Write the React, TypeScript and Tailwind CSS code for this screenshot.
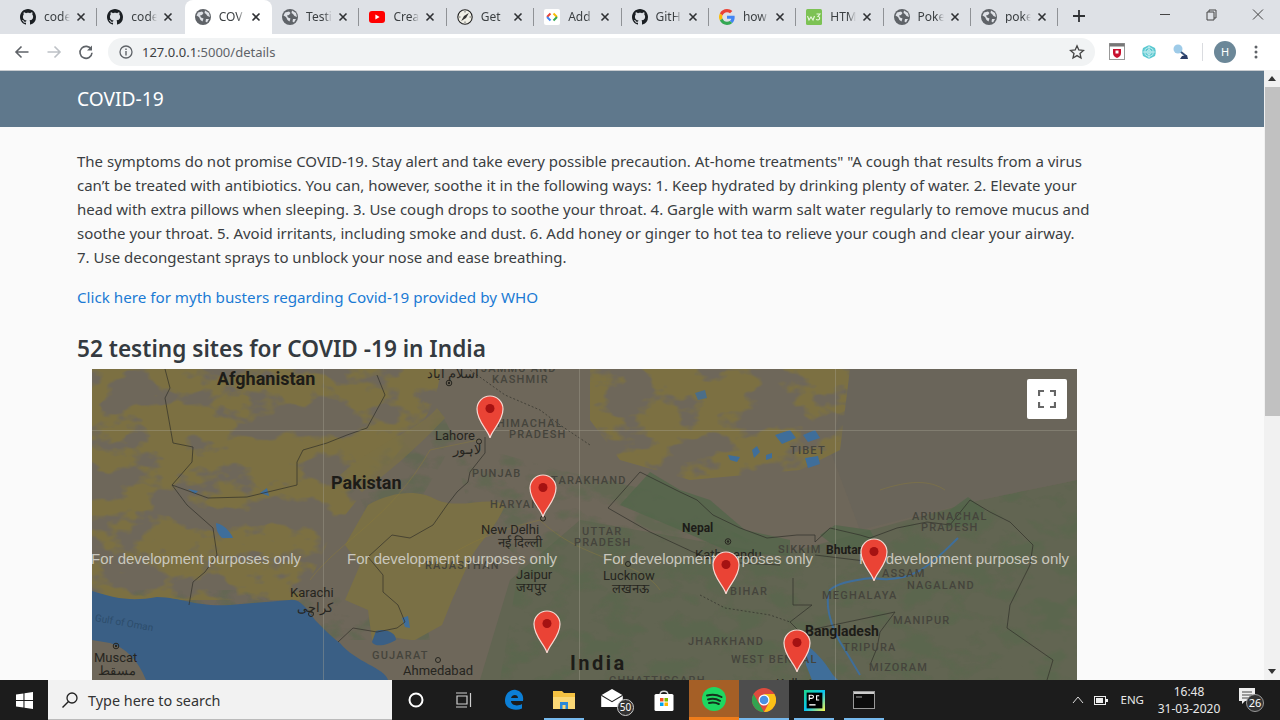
import React from "react";

const FONT = "font-['Noto_Sans','Open_Sans',sans-serif]";

function Globe() {
  return (
    <svg width="16" height="16" viewBox="0 0 16 16">
      <circle cx="8" cy="8" r="8" fill="#5f6368" />
      <path d="M3 3.5 L7 2.5 L8.5 4 L7 6 L5 6.5 L6 8.5 L8.5 9.5 L7.5 12.5 L5.5 11 L4 8 L1.5 6.5 Z M10 1.5 L14 4 L15 8 L12.5 7 L11 5 L9.5 4 Z M11 10 L14 10 L12 13.5 L10.5 12.5Z" fill="#dee1e6" />
    </svg>
  );
}
function GitHubIcon() {
  return (
    <svg width="16" height="16" viewBox="0 0 16 16" fill="#1b1f23">
      <path d="M8 0C3.58 0 0 3.58 0 8c0 3.54 2.29 6.53 5.47 7.59.4.07.55-.17.55-.38 0-.19-.01-.82-.01-1.49-2.01.37-2.53-.49-2.69-.94-.09-.23-.48-.94-.82-1.13-.28-.15-.68-.52-.01-.53.63-.01 1.08.58 1.23.82.72 1.21 1.87.87 2.33.66.07-.52.28-.87.51-1.07-1.78-.2-3.64-.89-3.64-3.95 0-.87.31-1.59.82-2.15-.08-.2-.36-1.02.08-2.12 0 0 .67-.21 2.2.82.64-.18 1.32-.27 2-.27s1.36.09 2 .27c1.53-1.04 2.2-.82 2.2-.82.44 1.1.16 1.92.08 2.12.51.56.82 1.27.82 2.15 0 3.07-1.87 3.75-3.65 3.95.29.25.54.73.54 1.48 0 1.07-.01 1.93-.01 2.2 0 .21.15.46.55.38A8.01 8.01 0 0 0 16 8c0-4.42-3.58-8-8-8z" />
    </svg>
  );
}
function YouTube() {
  return (
    <svg width="16" height="16" viewBox="0 0 16 16">
      <rect y="2" width="16" height="12" rx="3" fill="#f00" />
      <path d="M6.4 5.5 L10.6 8 L6.4 10.5Z" fill="#fff" />
    </svg>
  );
}
function Compass() {
  return (
    <svg width="16" height="16" viewBox="0 0 16 16">
      <circle cx="8" cy="8" r="7.2" fill="#f0efe6" stroke="#222" strokeWidth="1.1" />
      <path d="M11.8 4 L9 9 L4.2 12 L7 7Z" fill="#333" />
      <path d="M8 2 V3.5 M8 12.5 V14 M2 8 H3.5 M12.5 8 H14" stroke="#333" strokeWidth="0.7" />
    </svg>
  );
}
function CodeLab() {
  return (
    <svg width="16" height="16" viewBox="0 0 16 16">
      <rect width="16" height="16" rx="2" fill="#fff" />
      <path d="M6.5 4.5 L3 8" stroke="#ea4335" strokeWidth="2" fill="none" />
      <path d="M3 8 L6.5 11.5" stroke="#4285f4" strokeWidth="2" fill="none" />
      <path d="M9.5 4.5 L13 8" stroke="#fbbc05" strokeWidth="2" fill="none" />
      <path d="M13 8 L9.5 11.5" stroke="#34a853" strokeWidth="2" fill="none" />
    </svg>
  );
}
function GoogleG() {
  return (
    <svg width="16" height="16" viewBox="0 0 48 48">
      <path fill="#EA4335" d="M24 9.5c3.5 0 6.7 1.2 9.2 3.6l6.9-6.9C35.9 2.4 30.5 0 24 0 14.6 0 6.5 5.4 2.6 13.2l8 6.2C12.5 13.6 17.8 9.5 24 9.5z" />
      <path fill="#4285F4" d="M47 24.5c0-1.6-.1-3.1-.4-4.5H24v9h13c-.6 3-2.3 5.5-4.8 7.2l7.7 6C44.4 37.9 47 31.8 47 24.5z" />
      <path fill="#FBBC05" d="M10.5 28.6c-.5-1.4-.8-3-.8-4.6s.3-3.2.8-4.6l-8-6.2C.9 16.5 0 20.1 0 24s.9 7.5 2.6 10.8l7.9-6.2z" />
      <path fill="#34A853" d="M24 48c6.5 0 11.9-2.1 15.9-5.8l-7.7-6c-2.2 1.5-4.9 2.3-8.2 2.3-6.2 0-11.5-4.1-13.4-9.9l-8 6.2C6.5 42.6 14.6 48 24 48z" />
    </svg>
  );
}
function W3() {
  return (
    <svg width="16" height="16" viewBox="0 0 16 16">
      <rect width="16" height="16" rx="1.5" fill="#7cc254" />
      <path d="M1.5 7 L3 11 L5 8 L7 11 L8.5 7 M10.5 5 H14 L12 7.5 C14 7.5 14.5 10.5 12 11 L10 10.5" stroke="#e8f7dd" strokeWidth="1.1" fill="none" />
    </svg>
  );
}

const tabs: { t: string; icon: React.ReactNode; active?: boolean; sep?: boolean }[] = [
  { t: "code", icon: <GitHubIcon />, sep: true },
  { t: "code", icon: <GitHubIcon /> },
  { t: "COV", icon: <Globe />, active: true },
  { t: "Testi", icon: <Globe />, sep: true },
  { t: "Crea", icon: <YouTube />, sep: true },
  { t: "Get", icon: <Compass />, sep: true },
  { t: "Add", icon: <CodeLab />, sep: true },
  { t: "GitH", icon: <GitHubIcon />, sep: true },
  { t: "how", icon: <GoogleG />, sep: true },
  { t: "HTM", icon: <W3 />, sep: true },
  { t: "Poke", icon: <Globe />, sep: true },
  { t: "poke", icon: <Globe />, sep: true },
];

function Tab({ t, icon, active, sep }: (typeof tabs)[number]) {
  return (
    <div className={`relative flex h-[34px] w-[87.36px] shrink-0 items-center pl-[10px] ${active ? "rounded-t-lg bg-white" : ""}`}>
      <span className="flex w-4 shrink-0 items-center justify-center">{icon}</span>
      <span className="ml-2 w-[28px] whitespace-nowrap text-[12px] leading-none text-[#3c4043]">
        <span className="block w-[26px] truncate [text-overflow:clip] [mask-image:linear-gradient(to_right,black_70%,transparent)]">{t}</span>
      </span>
      <svg width="10" height="10" viewBox="0 0 10 10" className="ml-[4px] shrink-0">
        <path d="M1.5 1.5 L8.5 8.5 M8.5 1.5 L1.5 8.5" stroke="#2f3134" strokeWidth="1.6" />
      </svg>
      {sep && <span className="absolute right-0 top-[8px] h-[18px] w-px bg-[#8f9296]" />}
    </div>
  );
}

function TabStrip() {
  return (
    <div className="flex h-[34px] items-start bg-[#dee1e6] pl-[10px]">
      {tabs.map((t, i) => (
        <Tab key={i} {...t} />
      ))}
      <svg width="12" height="12" viewBox="0 0 12 12" className="ml-[15px] mt-[10px]">
        <path d="M6 0 V12 M0 6 H12" stroke="#2f3134" strokeWidth="1.8" />
      </svg>
      <div className="ml-auto flex h-[30px] items-center">
        <svg width="46" height="30" viewBox="0 0 46 30"><path d="M18 14.5 H28" stroke="#444" strokeWidth="1" /></svg>
        <svg width="46" height="30" viewBox="0 0 46 30"><path d="M19 12 H26 V20 H19 Z M21 12 V10 H28 V18 H26" stroke="#444" fill="none" strokeWidth="1" /></svg>
        <svg width="46" height="30" viewBox="0 0 46 30"><path d="M19 9.5 L29 19.5 M29 9.5 L19 19.5" stroke="#444" strokeWidth="1" /></svg>
      </div>
    </div>
  );
}

function Toolbar() {
  return (
    <div className="flex h-[36px] items-center bg-white">
      <svg width="16" height="16" viewBox="0 0 16 16" className="ml-[14px]">
        <path d="M14.5 8 H2 M7.5 2.5 L2 8 L7.5 13.5" stroke="#5f6368" strokeWidth="1.6" fill="none" />
      </svg>
      <svg width="16" height="16" viewBox="0 0 16 16" className="ml-[16px]">
        <path d="M1.5 8 H14 M8.5 2.5 L14 8 L8.5 13.5" stroke="#bdc1c6" strokeWidth="1.6" fill="none" />
      </svg>
      <svg width="16" height="16" viewBox="0 0 16 16" className="ml-[16px]">
        <path d="M13.3 5.5 A6 6 0 1 0 14 8.8" stroke="#5f6368" strokeWidth="1.6" fill="none" />
        <path d="M14 1.5 V6.5 H9 Z" fill="#5f6368" />
      </svg>
      <div className="ml-[14px] flex h-[28px] w-[987px] items-center rounded-full bg-[#f1f3f4] pl-[10px]">
        <svg width="16" height="16" viewBox="0 0 16 16">
          <circle cx="8" cy="8" r="6" stroke="#5f6368" strokeWidth="1.3" fill="none" />
          <path d="M8 7 V11.5 M8 4.5 V6" stroke="#5f6368" strokeWidth="1.4" />
        </svg>
        <span className="ml-[8px] translate-y-px text-[13px] text-[#3c4043]">
          127.0.0.1<span className="text-[#5f6368]">:5000/details</span>
        </span>
        <svg width="16" height="16" viewBox="0 0 16 16" className="ml-auto mr-[10px]">
          <path d="M8 1.8 L9.8 6 L14.5 6.4 L11 9.4 L12 14 L8 11.6 L4 14 L5 9.4 L1.5 6.4 L6.2 6 Z" stroke="#444" strokeWidth="1.3" fill="none" />
        </svg>
      </div>
      <svg width="16" height="18" viewBox="0 0 16 18" className="ml-[14px]">
        <rect x="0.5" y="0.5" width="15" height="16" fill="#fff" stroke="#999" />
        <rect x="0.5" y="0.5" width="15" height="3" fill="#777" />
        <path d="M4 6 H12 V10 C12 13 10 14 8 15 C6 14 4 13 4 10 Z" fill="#c8102e" />
        <path d="M6.5 7.5 H9.5 V10.5 H6.5 Z" fill="#fff" />
      </svg>
      <svg width="16" height="16" viewBox="0 0 16 16" className="ml-[16px]">
        <path d="M8 1 L14 4 L15 8 L14 12 L8 15 L2 12 L1 8 L2 4 Z" fill="#5ac8d0" />
        <path d="M8 3 L12 5.5 V10.5 L8 13 L4 10.5 V5.5 Z M8 5.5 L10 7 V9.5 L8 10.5 L6 9.5 V7 Z M1 8 H15 M8 1 V15" fill="none" stroke="#d4f3f5" strokeWidth="0.8" />
      </svg>
      <svg width="18" height="18" viewBox="0 0 18 18" className="ml-[15px]">
        <circle cx="6" cy="6" r="4.5" fill="#9ecbe8" />
        <path d="M9 9 L14 13" stroke="#35507a" strokeWidth="2" />
        <path d="M8 16 L16 16 L15 12 L10 13Z" fill="#2b3d66" />
      </svg>
      <span className="ml-[12px] h-[18px] w-px bg-[#dadce0]" />
      <span className="ml-[11px] flex h-[22px] w-[22px] items-center justify-center rounded-full bg-[#6b8798] text-[11px] text-white">H</span>
      <svg width="4" height="14" viewBox="0 0 4 14" className="ml-[18px]">
        <circle cx="2" cy="2" r="1.5" fill="#5f6368" />
        <circle cx="2" cy="7" r="1.5" fill="#5f6368" />
        <circle cx="2" cy="12" r="1.5" fill="#5f6368" />
      </svg>
    </div>
  );
}

function Pin({ x, y }: { x: number; y: number }) {
  return (
    <svg width="28" height="44" viewBox="0 0 28 44" className="absolute" style={{ left: x - 14, top: y - 43 }}>
      <path d="M14 43 C12.5 35 1 27 1 14 A13 13 0 0 1 27 14 C27 27 15.5 35 14 43 Z" fill="#ea4335" stroke="#f6d8d2" strokeWidth="1.2" />
      <circle cx="14" cy="13.5" r="4.5" fill="#a51212" />
    </svg>
  );
}

const REGION = "text-[11px] font-medium tracking-[1.2px] text-[#45443c]";
const CITY = "text-[13px] text-[#26251f]";
const COUNTRY = "text-[18px] font-bold text-[#1d1c18]";
const SMALLCOUNTRY = "text-[12px] font-bold text-[#1d1c18]";

const labels: { x: number; y: number; t: string; cls: string }[] = [
  { x: 217, y: 370, t: "Afghanistan", cls: COUNTRY },
  { x: 331, y: 474, t: "Pakistan", cls: COUNTRY },
  { x: 481, y: 363, t: "JAMMU AND", cls: REGION },
  { x: 492, y: 374, t: "KASHMIR", cls: REGION },
  { x: 497, y: 418, t: "HIMACHAL", cls: REGION },
  { x: 509, y: 429, t: "PRADESH", cls: REGION },
  { x: 472, y: 468, t: "PUNJAB", cls: REGION },
  { x: 490, y: 499, t: "HARYAN", cls: REGION },
  { x: 551, y: 475, t: "TARAKHAND", cls: REGION },
  { x: 425, y: 560, t: "RAJASTHAN", cls: REGION },
  { x: 582, y: 526, t: "UTTAR", cls: REGION },
  { x: 574, y: 537, t: "PRADESH", cls: REGION },
  { x: 790, y: 445, t: "TIBET", cls: REGION },
  { x: 912, y: 511, t: "ARUNACHAL", cls: REGION },
  { x: 921, y: 522, t: "PRADESH", cls: REGION },
  { x: 778, y: 544, t: "SIKKIM", cls: REGION },
  { x: 882, y: 568, t: "ASSAM", cls: REGION },
  { x: 907, y: 580, t: "NAGALAND", cls: REGION },
  { x: 822, y: 590, t: "MEGHALAYA", cls: REGION },
  { x: 893, y: 615, t: "MANIPUR", cls: REGION },
  { x: 730, y: 586, t: "BIHAR", cls: REGION },
  { x: 688, y: 636, t: "JHARKHAND", cls: REGION },
  { x: 731, y: 654, t: "WEST BENGAL", cls: REGION },
  { x: 843, y: 642, t: "TRIPURA", cls: REGION },
  { x: 869, y: 662, t: "MIZORAM", cls: REGION },
  { x: 372, y: 650, t: "GUJARAT", cls: REGION },
  { x: 609, y: 675, t: "CHHATTISGARH", cls: REGION },
  { x: 435, y: 429, t: "Lahore", cls: CITY },
  { x: 453, y: 443, t: "لاہور", cls: CITY },
  { x: 481, y: 523, t: "New Delhi", cls: CITY },
  { x: 498, y: 536, t: "नई दिल्ली", cls: CITY },
  { x: 516, y: 568, t: "Jaipur", cls: CITY },
  { x: 516, y: 581, t: "जयपुर", cls: CITY },
  { x: 290, y: 586, t: "Karachi", cls: CITY },
  { x: 297, y: 601, t: "کراچی", cls: CITY },
  { x: 94, y: 651, t: "Muscat", cls: CITY },
  { x: 98, y: 664, t: "مسقط", cls: CITY },
  { x: 403, y: 664, t: "Ahmedabad", cls: CITY },
  { x: 427, y: 367, t: "اسلام آباد", cls: CITY },
  { x: 695, y: 548, t: "Kathmandu", cls: CITY },
  { x: 603, y: 569, t: "Lucknow", cls: CITY },
  { x: 612, y: 582, t: "लखनऊ", cls: CITY },
  { x: 776, y: 677, t: "Kolkata", cls: CITY },
  { x: 682, y: 522, t: "Nepal", cls: SMALLCOUNTRY },
  { x: 826, y: 544, t: "Bhutan", cls: SMALLCOUNTRY },
  { x: 805, y: 624, t: "Bangladesh", cls: "text-[14px] font-bold text-[#1d1c18]" },
  { x: 570, y: 653, t: "India", cls: "text-[20px] font-bold tracking-[2.5px] text-[#1d1c18]" },
  { x: 95, y: 613, t: "Gulf of Oman", cls: "origin-left rotate-[10deg] text-[10px] text-[#2d4d6c]" },
];

function MapGeo() {
  return (
    <svg className="absolute inset-0" width="985" height="311" viewBox="92 369 985 311">
      <defs>
        <filter id="aridNoise" x="0" y="0" width="100%" height="100%" colorInterpolationFilters="sRGB">
          <feTurbulence type="fractalNoise" baseFrequency="0.02 0.032" numOctaves="4" seed="7" />
          <feColorMatrix type="matrix" values="0 0 0 0 0.485  0 0 0 0 0.44  0 0 0 0 0.26  10 0 0 0 -4.35" />
        </filter>
        <filter id="greenNoise" x="0" y="0" width="100%" height="100%" colorInterpolationFilters="sRGB">
          <feTurbulence type="fractalNoise" baseFrequency="0.03 0.05" numOctaves="4" seed="21" />
          <feColorMatrix type="matrix" values="0 0 0 0 0.33  0 0 0 0 0.41  0 0 0 0 0.29  5 0 0 0 -2.4" />
        </filter>
        <clipPath id="aridArea">
          <path d="M92 369 H440 C440 400 420 430 400 450 C370 490 340 510 320 560 L300 600 L92 600Z" />
          <path d="M590 369 H850 L840 450 L800 470 L690 480 L620 460 L590 420Z" />
        </clipPath>
        <clipPath id="greenArea">
          <path d="M450 440 L560 470 L650 490 L780 555 L880 530 L980 500 L1077 480 V680 H500 L520 560 L470 510Z" />
          <path d="M92 590 H420 L430 640 H92Z" />
          <path d="M330 490 L440 410 L455 440 L420 500 L370 520Z" />
        </clipPath>
      </defs>
      <rect x="92" y="369" width="985" height="311" fill="#6e675a" />
      <path d="M580 520 L780 555 L980 500 L1077 480 V680 H480 L510 580Z" fill="#626552" />
      <path d="M850 369 H1077 V480 L980 500 L860 530 L830 450Z" fill="#6a655a" />
      <rect x="92" y="369" width="985" height="311" filter="url(#greenNoise)" clipPath="url(#greenArea)" opacity="0.45" />
      <rect x="92" y="369" width="985" height="311" filter="url(#aridNoise)" clipPath="url(#aridArea)" />
      {/* Thar desert */}
      <path d="M368 505 C395 490 420 490 437 500 C460 510 490 495 505 505 C495 530 480 540 470 560 L452 600 L442 625 L415 640 C400 640 385 632 372 640 L368 610 L345 600 L360 565 L345 545Z" fill="#7a7045" />
      <path d="M340 475 C380 440 420 430 437 408 L445 418 C415 450 385 475 362 492Z" fill="#7a7045" opacity="0.7" />
      {/* Himalaya green */}
      <path d="M650 472 L680 490 L710 500 L745 530 L790 540 L790 556 L730 552 L680 530 L620 505Z" fill="#51664a" opacity="0.75" />
      <path d="M820 535 L835 525 L870 530 L878 545 L840 550Z" fill="#51664a" opacity="0.75" />
      <path d="M950 510 L968 497 L985 510 L975 525 L945 528Z" fill="#51664a" opacity="0.75" />
      {/* Sea */}
      <path d="M92 591 C115 598 130 602 157 597 C185 598 195 607 230 605 L290 600 C300 598 308 610 315 620 C325 630 335 640 340 643 C355 662 385 668 388 680 H146 C138 660 125 647 110 643 L92 640Z" fill="#3a5f85" />
      <path d="M376 631 C384 628 396 632 396 640 C388 645 375 648 372 642Z" fill="#3a5f85" />
      {/* lakes */}
      <g fill="#3f6e9a">
        <path d="M216 523 C226 525 232 535 233 538 L222 538 C218 534 216 530 216 523Z" />
        <path d="M804 644 C815 650 825 662 833 675 L838 680 H812 L806 665Z" />
        <path d="M803 435 L815 430 L820 438 L808 442Z" />
        <path d="M805 458 L818 456 L820 464 L808 468Z" />
        <path d="M728 455 L740 457 L737 462 L730 460Z" />
        <path d="M752 450 L757 446 L760 452 L754 458Z" />
        <path d="M766 455 L772 453 L772 458 L766 460Z" />
        <path d="M775 435 L790 430 L796 438 L782 444Z" />
        <path d="M695 393 L705 390 L707 398 L698 400Z" opacity="0.8" />
        <path d="M260 493 L267 488 L269 496 Z" />
        <path d="M188 489 L198 491 L195 494Z" />
        <path d="M402 618 L408 616 L410 628 L405 627Z" />
      </g>
      <path d="M958 538 C935 560 915 585 873 578 C850 580 835 585 830 590 C825 600 828 625 845 650 L860 675" stroke="#3f6e9a" strokeWidth="2" fill="none" />
      {/* borders */}
      <g fill="none" stroke="#2f2e28" strokeWidth="0.8" opacity="0.85">
        <path d="M165 369 L170 388 L165 398 L173 443 L193 447 L192 462 L172 485 L208 498 L247 497 L297 485 L297 462 L303 450 L327 443 L347 435 L367 428 L385 395 L377 375" />
        <path d="M172 485 L187 505 L213 528 L217 555 L205 572 L193 582 L189 605" />
        <path d="M485 437 L485 453 L470 472 L468 482 L457 492 L447 505 L433 525 L410 538 L392 535 L368 557 L383 575 L383 592 L398 605 L405 622 L397 628 L377 632 L353 628 L338 642" />
        <path d="M640 472 L608 508 L650 532 L693 552 L720 562 L780 565" />
        <path d="M640 472 L660 482 L680 492 L697 500 L713 515 L740 528 L767 538 L797 535 L815 535 L815 542 L830 528 L860 535 L870 538 L897 528 L927 522 L950 525 L970 500 L990 512 L1010 522 L1033 545 L1030 565 L1010 605 L1007 628 L1053 660 L1047 680" />
        <path d="M815 555 L873 562" />
        <path d="M793 578 L793 605 L812 605 L790 622 L800 632 L895 612 L880 632 L877 648 L870 665" />
        <path d="M470 370 L505 395 L540 410 L560 425 L590 445" strokeDasharray="2 2" />
        <path d="M700 595 L725 608 L770 615 L790 622" strokeDasharray="2 2" />
      </g>
      <g fill="none" stroke="#8a7a3a" strokeWidth="0.8" opacity="0.6">
        <path d="M310 580 C340 540 390 520 430 450 L478 440" />
        <path d="M435 565 C470 540 500 530 540 520 C580 560 640 560 660 590" />
        <path d="M880 490 C910 480 930 480 945 490" />
      </g>
      {/* tile seams */}
      <path d="M92 430.5 H1077 M323.5 369 V680 M579.5 369 V680 M835.5 369 V680" stroke="#a8a597" strokeWidth="0.7" opacity="0.55" fill="none" />
      {/* city markers */}
      <g fill="none" stroke="#26251f" strokeWidth="1">
        <circle cx="449" cy="383" r="2.8" />
        <circle cx="479" cy="441.5" r="2.5" />
        <circle cx="116" cy="646" r="2.8" />
        <circle cx="728" cy="541.5" r="2.8" />
        <circle cx="438" cy="660" r="2.5" />
        <circle cx="311" cy="614" r="2.5" />
        <circle cx="543" cy="518.5" r="2.5" />
        <circle cx="628" cy="564" r="2.5" />
      </g>
      <g fill="#26251f">
        <circle cx="449" cy="383" r="1.2" />
        <circle cx="116" cy="646" r="1.2" />
        <circle cx="728" cy="541.5" r="1.2" />
      </g>
    </svg>
  );
}

function GoogleMap() {
  const tags = [91, 347, 603, 859];
  return (
    <div className="relative ml-[15px] mt-[2px] h-[311px] w-[985px] overflow-hidden">
      <MapGeo />
      {labels.map((l, i) => (
        <span
          key={i}
          className={`absolute whitespace-nowrap font-['Roboto','Noto_Sans_CJK_SC',sans-serif] leading-none ${l.cls}`}
          style={{ left: l.x - 92, top: l.y - 369 }}
        >
          {l.t}
        </span>
      ))}
      {tags.map((x) => (
        <span
          key={x}
          className="absolute top-[181px] whitespace-nowrap font-['Liberation_Sans',sans-serif] text-[15px] leading-[17px] text-[#c9c7bd]"
          style={{ left: x - 92 }}
        >
          For development purposes only
        </span>
      ))}
      <Pin x={398} y={69} />
      <Pin x={451} y={148} />
      <Pin x={455} y={284} />
      <Pin x={634} y={225} />
      <Pin x={782} y={212} />
      <Pin x={705} y={303} />
      <button className="absolute left-[935px] top-[10px] flex h-10 w-10 items-center justify-center rounded-[2px] bg-white">
        <svg width="18" height="18" viewBox="0 0 18 18">
          <path d="M1 6 V1 H6 M12 1 H17 V6 M17 12 V17 H12 M6 17 H1 V12" stroke="#666" strokeWidth="2.2" fill="none" />
        </svg>
      </button>
    </div>
  );
}

function Page() {
  return (
    <div className={`flex-1 overflow-hidden bg-[#fafafa] ${FONT}`}>
      <div className="h-px bg-[#c8ccd0]" />
      <div className="flex h-[56px] items-center bg-[#5f788c] pl-[77px] text-[19.2px] text-white">COVID-19</div>
      <div className="pl-[77px] pt-[22px]">
        <p className="w-[1030px] text-[15px] leading-[24px] text-[#3a3e42]">
          The symptoms do not promise COVID-19. Stay alert and take every possible precaution. At-home treatments" "A cough that results from a virus<br />
          can’t be treated with antibiotics. You can, however, soothe it in the following ways: 1. Keep hydrated by drinking plenty of water. 2. Elevate your<br />
          head with extra pillows when sleeping. 3. Use cough drops to soothe your throat. 4. Gargle with warm salt water regularly to remove mucus and<br />
          soothe your throat. 5. Avoid irritants, including smoke and dust. 6. Add honey or ginger to hot tea to relieve your cough and clear your airway.<br />
          7. Use decongestant sprays to unblock your nose and ease breathing.
        </p>
        <a className="mt-[16px] block text-[15.2px] leading-[24px] text-[#1a7ad4]">Click here for myth busters regarding Covid-19 provided by WHO</a>
        <h2 className="mt-[22px] text-[22.6px] font-semibold leading-[36px] text-[#343a40]">52 testing sites for COVID -19 in India</h2>
        <GoogleMap />
      </div>
    </div>
  );
}

function Scrollbar() {
  return (
    <div className="flex w-4 shrink-0 flex-col bg-[#f1f1f1]">
      <div className="flex h-[17px] items-center justify-center">
        <svg width="8" height="5" viewBox="0 0 8 5"><path d="M4 0 L8 5 H0Z" fill="#333" /></svg>
      </div>
      <div className="ml-px h-[329px] bg-[#c1c1c1]" />
      <div className="flex-1" />
      <div className="flex h-[17px] items-center justify-center">
        <svg width="8" height="5" viewBox="0 0 8 5"><path d="M4 5 L8 0 H0Z" fill="#333" /></svg>
      </div>
    </div>
  );
}

function Cell({ children, cls = "" }: { children: React.ReactNode; cls?: string }) {
  return <div className={`relative flex h-[40px] w-[50px] shrink-0 items-center justify-center ${cls}`}>{children}</div>;
}
function Underline() {
  return <span className="absolute bottom-0 left-[5px] right-[5px] h-[2px] bg-[#76b9ed]" />;
}

function Taskbar() {
  return (
    <div className={`flex h-[40px] items-center bg-[#1c1c1c] ${FONT}`}>
      <div className="flex h-[40px] w-[48px] shrink-0 items-center justify-center">
        <svg width="17" height="17" viewBox="0 0 16 16">
          <path d="M0 2.3 L7 1.3 V7.5 H0Z M8 1.1 L16 0 V7.5 H8Z M0 8.5 H7 V14.7 L0 13.7Z M8 8.5 H16 V16 L8 14.9Z" fill="#fff" />
        </svg>
      </div>
      <div className="flex h-[40px] w-[344px] shrink-0 items-center border-b border-[#bbb] bg-[#f2f2f2] pl-[13px]">
        <svg width="18" height="18" viewBox="0 0 18 18">
          <circle cx="11" cy="7" r="5" stroke="#222" strokeWidth="1.3" fill="none" />
          <path d="M7.5 10.5 L1.5 16.5" stroke="#222" strokeWidth="1.5" />
        </svg>
        <span className="ml-[9px] translate-y-px text-[14.4px] text-[#333]">Type here to search</span>
      </div>
      <Cell cls="-mr-[2px] -ml-px">
        <svg width="16" height="16" viewBox="0 0 16 16">
          <circle cx="8" cy="8" r="6.5" stroke="#fff" strokeWidth="2" fill="none" />
        </svg>
      </Cell>
      <Cell>
        <svg width="18" height="16" viewBox="0 0 18 16">
          <path d="M1 1 H12 M1 15 H12 M2 4 H12 V12 H2 Z M15.5 1 V15" stroke="#cfcfcf" strokeWidth="1.2" fill="none" />
        </svg>
      </Cell>
      <Cell>
        <svg width="22" height="22" viewBox="0 0 22 22">
          <path d="M2 12 C2 4 8 0 13 1 C18 2 21 6 20 12 H8 C8 16 14 18 19 15 V19.5 C12 22.5 2 20 2 12 Z M8 9 H15 C15 5 9 5 8 9Z" fill="#0c7fd6" />
        </svg>
      </Cell>
      <Cell>
        <svg width="22" height="20" viewBox="0 0 22 20">
          <path d="M0 1 H9 L11 3 H22 V19 H0Z" fill="#f5c242" />
          <path d="M0 7 H22 V19 H0Z" fill="#fbd876" />
          <path d="M7 12 H15 V19 H12.5 V15 H9.5 V19 H7Z" fill="#2b88d8" />
        </svg>
        <Underline />
      </Cell>
      <Cell>
        <svg width="22" height="18" viewBox="0 0 24 20" className="-translate-x-[2px] -translate-y-[2px]">
          <path d="M0 7 L12 0 L24 7 V20 H0Z" fill="#fff" />
          <path d="M0 7 L12 14 L24 7" stroke="#222" strokeWidth="1.2" fill="none" />
        </svg>
        <span className="absolute left-[28px] top-[19px] flex h-[17px] w-[17px] items-center justify-center rounded-full border border-[#ccc] bg-[#333] text-[10px] text-white">50</span>
      </Cell>
      <Cell>
        <svg width="20" height="24" viewBox="0 0 20 24">
          <path d="M6 7 C6 2 14 2 14 7" stroke="#ddd" fill="none" strokeWidth="1.3" />
          <rect x="0.5" y="6" width="19" height="17" rx="1.5" fill="#fff" />
          <rect x="6" y="10" width="3.5" height="3.5" fill="#f25022" />
          <rect x="10.5" y="10" width="3.5" height="3.5" fill="#7fba00" />
          <rect x="6" y="14.5" width="3.5" height="3.5" fill="#00a4ef" />
          <rect x="10.5" y="14.5" width="3.5" height="3.5" fill="#ffb900" />
        </svg>
      </Cell>
      <Cell cls="border-b-[3px] border-[#ef7d1b] bg-[#a55f26]">
        <svg width="24" height="24" viewBox="0 0 24 24">
          <circle cx="12" cy="12" r="12" fill="#1ed760" />
          <path d="M5 8.5 C10 7 15 7.5 19.5 10 M6 12.5 C10 11.2 14.5 11.7 18 13.8 M7 16 C10.5 15 14 15.5 16.8 17" stroke="#14301e" strokeWidth="2" fill="none" strokeLinecap="round" />
        </svg>
      </Cell>
      <Cell cls="bg-[#4d4d4d]">
        <svg width="24" height="24" viewBox="0 0 24 24">
          <circle cx="12" cy="12" r="12" fill="#dd4b3e" />
          <path d="M12 24 A12 12 0 0 1 1.6 6 L7 15.5 L12 24Z" fill="#32a350" />
          <path d="M12 24 A12 12 0 0 0 22.4 6 H12 L17 14.5Z" fill="#fbc117" />
          <circle cx="12" cy="12" r="5.5" fill="#fff" />
          <circle cx="12" cy="12" r="4.3" fill="#4a90e2" />
        </svg>
        <span className="absolute bottom-0 left-0 right-0 h-[2px] bg-[#76b9ed]" />
      </Cell>
      <Cell>
        <svg width="21" height="21" viewBox="0 0 20 20">
          <defs>
            <linearGradient id="pc" x1="0" y1="0" x2="1" y2="1">
              <stop offset="0" stopColor="#21d789" />
              <stop offset="0.5" stopColor="#07c3f2" />
              <stop offset="1" stopColor="#fcf84a" />
            </linearGradient>
          </defs>
          <rect width="20" height="20" fill="url(#pc)" />
          <rect x="2.5" y="2.5" width="15" height="15" fill="#000" />
          <path d="M5 10 V5 H7.5 A1.5 1.5 0 0 1 7.5 8 H5 M14.5 5.5 H12 V9.5 H14.5" stroke="#fff" strokeWidth="1.1" fill="none" />
          <rect x="5" y="13.5" width="6" height="1.3" fill="#fff" />
        </svg>
        <Underline />
      </Cell>
      <Cell>
        <svg width="22" height="18" viewBox="0 0 22 18">
          <rect x="0.5" y="0.5" width="21" height="17" fill="#0c0c0c" stroke="#999" />
          <rect x="1" y="1" width="20" height="2" fill="#ccc" />
          <path d="M3 6 H9" stroke="#bbb" strokeWidth="0.9" />
        </svg>
        <Underline />
      </Cell>
      <div className="ml-auto flex items-center">
        <svg width="12" height="8" viewBox="0 0 12 8"><path d="M1 7 L6 1 L11 7" stroke="#ddd" strokeWidth="1" fill="none" /></svg>
        <svg width="14" height="9" viewBox="0 0 14 9" className="ml-[10px]">
          <rect x="0.5" y="0.5" width="11" height="8" stroke="#eee" fill="none" />
          <rect x="2" y="2" width="7" height="5" fill="#eee" />
          <rect x="12" y="3" width="2" height="3" fill="#eee" />
        </svg>
        <span className="ml-[12px] text-[11.5px] text-[#e8e8e8]">ENG</span>
        <div className="ml-[13px] w-[64px] text-center text-[12px] leading-[17px] text-[#e8e8e8]">
          <div>16:48</div>
          <div>31-03-2020</div>
        </div>
        <div className="relative ml-[18px] mr-[13px] h-[24px] w-[28px]">
          <svg width="16" height="16" viewBox="0 0 16 16" className="absolute left-0 top-0">
            <path d="M0 0 H16 V13 H6 L3 16 V13 H0Z" fill="#eee" />
            <path d="M3 4 H13 M3 7 H13 M3 10 H10" stroke="#444" strokeWidth="1" />
          </svg>
          <span className="absolute left-[7px] top-[6px] flex h-[18px] w-[18px] items-center justify-center rounded-full border border-[#999] bg-[#333] text-[11px] text-white">26</span>
        </div>
      </div>
    </div>
  );
}

export default function App() {
  return (
    <div className="flex h-[720px] w-[1280px] flex-col overflow-hidden font-['Noto_Sans',sans-serif]">
      <TabStrip />
      <Toolbar />
      <div className="flex min-h-0 flex-1">
        <Page />
        <Scrollbar />
      </div>
      <Taskbar />
    </div>
  );
}
